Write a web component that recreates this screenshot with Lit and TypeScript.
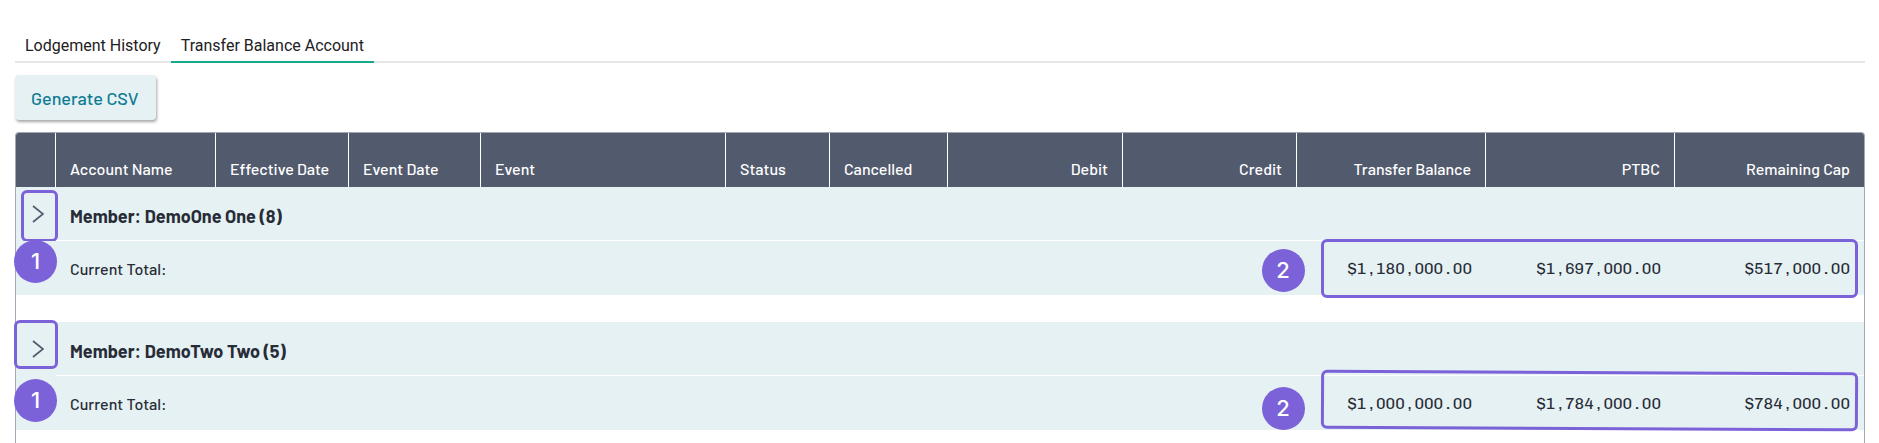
import { LitElement, html, css } from "lit";
import { customElement, property, state } from "lit/decorators.js";

interface Column {
  label: string;
  width: number;
  numeric?: boolean;
}

interface Member {
  name: string;
  count: number;
  balance: string;
  ptbc: string;
  remaining: string;
}

const COLUMNS: Column[] = [
  { label: "", width: 40 },
  { label: "Account Name", width: 160 },
  { label: "Effective Date", width: 133 },
  { label: "Event Date", width: 132 },
  { label: "Event", width: 245 },
  { label: "Status", width: 104 },
  { label: "Cancelled", width: 118 },
  { label: "Debit", width: 175, numeric: true },
  { label: "Credit", width: 174, numeric: true },
  { label: "Transfer Balance", width: 189, numeric: true },
  { label: "PTBC", width: 189, numeric: true },
  { label: "Remaining Cap", width: 189, numeric: true },
];

const TOTAL_WIDTH = COLUMNS.reduce((sum, c) => sum + c.width, 0);

const MEMBERS: Member[] = [
  { name: "DemoOne One", count: 8, balance: "$1,180,000.00", ptbc: "$1,697,000.00", remaining: "$517,000.00" },
  { name: "DemoTwo Two", count: 5, balance: "$1,000,000.00", ptbc: "$1,784,000.00", remaining: "$784,000.00" },
];

@customElement("balance-table")
export class BalanceTable extends LitElement {
  @property({ attribute: false }) members: Member[] = [];
  @state() private expanded = new Set<number>();

  static styles = css`
    :host {
      display: block;
      border: 1px solid #a3a8b6;
      border-bottom: 0;
      border-radius: 4px 4px 0 0;
      color: #272c37;
    }
    .table {
      width: 100%;
      table-layout: fixed;
      border-collapse: separate;
      border-spacing: 0;
    }
    th,
    td {
      box-sizing: border-box;
      padding: 0 14px;
      text-align: left;
      white-space: nowrap;
    }
    .head th {
      height: 54px;
      padding: 8px 14px;
      background: #525a6d;
      border-right: 1px solid #fff;
      color: #fff;
      font-size: 16px;
      font-weight: 500;
      line-height: 20px;
      vertical-align: bottom;
    }
    .head th:first-child {
      border-top-left-radius: 3px;
    }
    .head th:last-child {
      border-right: 0;
      border-top-right-radius: 3px;
    }
    .head .numeric,
    .total .amount {
      text-align: right;
    }
    .member,
    .total {
      position: relative;
      background: #e6f1f3;
    }
    .member .name {
      height: 54px;
      padding-top: 4px;
      border-bottom: 1px solid #fff;
      font-size: 18px;
      font-weight: 700;
    }
    .toggle-cell {
      padding: 0;
      text-align: center;
      vertical-align: top;
    }
    .toggle {
      display: block;
      width: 100%;
      height: 53px;
      padding: 0 0 0 2px;
      border: 0;
      background: none;
      cursor: pointer;
    }
    .chevron {
      display: block;
      margin: 0 auto;
      fill: none;
      stroke: #525a6d;
      stroke-width: 1.7;
    }
    .total td {
      height: 54px;
      font-size: 16px;
    }
    .total .label {
      font-weight: 500;
    }
    .total .amount {
      font-family: "Chivo Mono", "Liberation Mono", monospace;
    }
    .spacer td {
      height: 27px;
    }
    .outline {
      position: absolute;
      box-sizing: border-box;
      border: 3px solid #7c62d8;
      border-radius: 6px;
      pointer-events: none;
    }
    .outline.toggle-mark {
      left: 5px;
      top: 3px;
      width: 37px;
      height: 52px;
    }
    .outline.toggle-mark.wide {
      left: -2px;
      top: -2px;
      width: 44px;
      height: 49px;
    }
    .outline.amounts-mark {
      left: 70.6%;
      right: 6px;
      top: -2px;
      height: 59px;
    }
    .outline.amounts-mark.tilted {
      top: -5px;
      transform: rotate(0.28deg);
    }
    .badge {
      position: absolute;
      z-index: 1;
      width: 43px;
      height: 43px;
      border-radius: 50%;
      background: #7c62d8;
      color: #fff;
      font: 500 22px/42px Inter, sans-serif;
      text-align: center;
    }
    .badge.one {
      left: -2px;
      top: -1px;
    }
    .badge.two {
      left: 67.4%;
      top: 8px;
    }
    .badge.one.lower {
      top: 3px;
    }
    .badge.two.lower {
      top: 11px;
    }
  `;

  private toggle(index: number) {
    const next = new Set(this.expanded);
    next.has(index) ? next.delete(index) : next.add(index);
    this.expanded = next;
  }

  private renderMember(m: Member, i: number) {
    const alt = i % 2 === 1;
    return html`
      <tbody>
        ${i > 0 ? html`<tr class="spacer"><td colspan="12"></td></tr>` : ""}
        <tr class="member">
          <td class="toggle-cell">
            <button
              class="toggle"
              type="button"
              aria-label="Show events for ${m.name}"
              aria-expanded=${this.expanded.has(i)}
              @click=${() => this.toggle(i)}
            >
              <svg class="chevron" width="14" height="18" viewBox="0 0 14 18" aria-hidden="true">
                <path d="M3 1 L13 9 L3 17" />
              </svg>
            </button>
            <span class="outline toggle-mark ${alt ? "wide" : ""}"></span>
          </td>
          <td class="name" colspan="11">Member: ${m.name} (${m.count})</td>
        </tr>
        <tr class="total">
          <td><span class="badge one ${alt ? "lower" : ""}">1</span></td>
          <td class="label" colspan="7">Current Total:</td>
          <td><span class="badge two ${alt ? "lower" : ""}">2</span></td>
          <td class="amount">${m.balance}</td>
          <td class="amount">${m.ptbc}</td>
          <td class="amount">
            ${m.remaining}<span class="outline amounts-mark ${alt ? "tilted" : ""}"></span>
          </td>
        </tr>
      </tbody>
    `;
  }

  render() {
    return html`
      <table class="table">
        <colgroup>
          ${COLUMNS.map((c) => html`<col style="width:${(c.width / TOTAL_WIDTH) * 100}%" />`)}
        </colgroup>
        <thead class="head">
          <tr>
            ${COLUMNS.map((c) => html`<th scope="col" class=${c.numeric ? "numeric" : ""}>${c.label}</th>`)}
          </tr>
        </thead>
        ${this.members.map((m, i) => this.renderMember(m, i))}
      </table>
    `;
  }
}

@customElement("app-root")
export class AppRoot extends LitElement {
  @state() private tab = 1;

  static styles = css`
    :host {
      display: flex;
      flex-direction: column;
      box-sizing: border-box;
      min-height: 100vh;
      padding: 28px 14px 0 15px;
      background: #fff;
      font-family: Barlow, Roboto, sans-serif;
    }
    .tabs {
      display: flex;
      box-shadow: inset 0 -2px #e6e6e6;
    }
    .tab {
      padding: 8px 10px 5px;
      border: 0;
      border-bottom: 2px solid transparent;
      background: none;
      color: #212121;
      font: 400 16px/20px Roboto, sans-serif;
      cursor: pointer;
    }
    .tab.active {
      border-color: #17a88b;
    }
    .generate {
      align-self: flex-start;
      margin: 12px 0;
      padding: 13px 17px 12px 16px;
      border: 0;
      border-radius: 4px;
      background: #e6f1f3;
      box-shadow: 1px 2px 3px rgba(0, 0, 0, 0.35);
      color: #107c93;
      font: 500 18px/20px Barlow, Roboto, sans-serif;
      cursor: pointer;
    }
    .ledger {
      flex: 1;
    }
  `;

  render() {
    return html`
      <div class="tabs" role="tablist">
        ${["Lodgement History", "Transfer Balance Account"].map(
          (label, i) => html`<button
            class="tab ${this.tab === i ? "active" : ""}"
            type="button"
            role="tab"
            aria-selected=${this.tab === i}
            @click=${() => (this.tab = i)}
          >${label}</button>`
        )}
      </div>
      <button class="generate" type="button">Generate CSV</button>
      <balance-table class="ledger" .members=${MEMBERS}></balance-table>
    `;
  }
}
